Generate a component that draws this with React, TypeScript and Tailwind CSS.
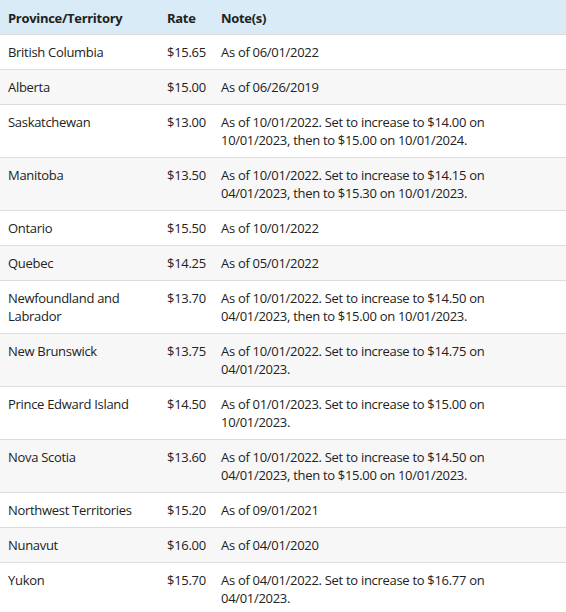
const rows: [string, string, string][] = [
  ["British Columbia", "$15.65", "As of 06/01/2022"],
  ["Alberta", "$15.00", "As of 06/26/2019"],
  ["Saskatchewan", "$13.00", "As of 10/01/2022. Set to increase to $14.00 on 10/01/2023, then to $15.00 on 10/01/2024."],
  ["Manitoba", "$13.50", "As of 10/01/2022. Set to increase to $14.15 on 04/01/2023, then to $15.30 on 10/01/2023."],
  ["Ontario", "$15.50", "As of 10/01/2022"],
  ["Quebec", "$14.25", "As of 05/01/2022"],
  ["Newfoundland and Labrador", "$13.70", "As of 10/01/2022. Set to increase to $14.50 on 04/01/2023, then to $15.00 on 10/01/2023."],
  ["New Brunswick", "$13.75", "As of 10/01/2022. Set to increase to $14.75 on 04/01/2023."],
  ["Prince Edward Island", "$14.50", "As of 01/01/2023. Set to increase to $15.00 on 10/01/2023."],
  ["Nova Scotia", "$13.60", "As of 10/01/2022. Set to increase to $14.50 on 04/01/2023, then to $15.00 on 10/01/2023."],
  ["Northwest Territories", "$15.20", "As of 09/01/2021"],
  ["Nunavut", "$16.00", "As of 04/01/2020"],
  ["Yukon", "$15.70", "As of 04/01/2022. Set to increase to $16.77 on 04/01/2023."],
];

export default function App() {
  return (
    <div className="w-[566px] bg-white font-['Open_Sans',sans-serif] text-[13px] leading-[18px] tracking-[-0.3px] text-[#222]">
      <table className="w-full table-fixed border-collapse">
        <colgroup>
          <col className="w-[159px]" />
          <col className="w-[54px]" />
          <col />
        </colgroup>
        <thead>
          <tr className="bg-[#d9ebf6]">
            <th className="border-b border-[#dcdcdc] px-2 pt-[9px] pb-[7px] text-left font-bold">Province/Territory</th>
            <th className="border-b border-[#dcdcdc] px-2 pt-[9px] pb-[7px] text-left font-bold">Rate</th>
            <th className="border-b border-[#dcdcdc] px-2 pt-[9px] pb-[7px] text-left font-bold">Note(s)</th>
          </tr>
        </thead>
        <tbody>
          {rows.map(([name, rate, note], i) => (
            <tr key={name} className={i % 2 ? "bg-[#f7f7f7]" : "bg-white"}>
              <td className="border-b border-[#dcdcdc] px-2 py-2 align-top">{name}</td>
              <td className="border-b border-[#dcdcdc] px-2 py-2 align-top">{rate}</td>
              <td className="border-b border-[#dcdcdc] px-2 py-2 align-top">
                <div className="max-w-[290px]">{note}</div>
              </td>
            </tr>
          ))}
        </tbody>
      </table>
    </div>
  );
}
